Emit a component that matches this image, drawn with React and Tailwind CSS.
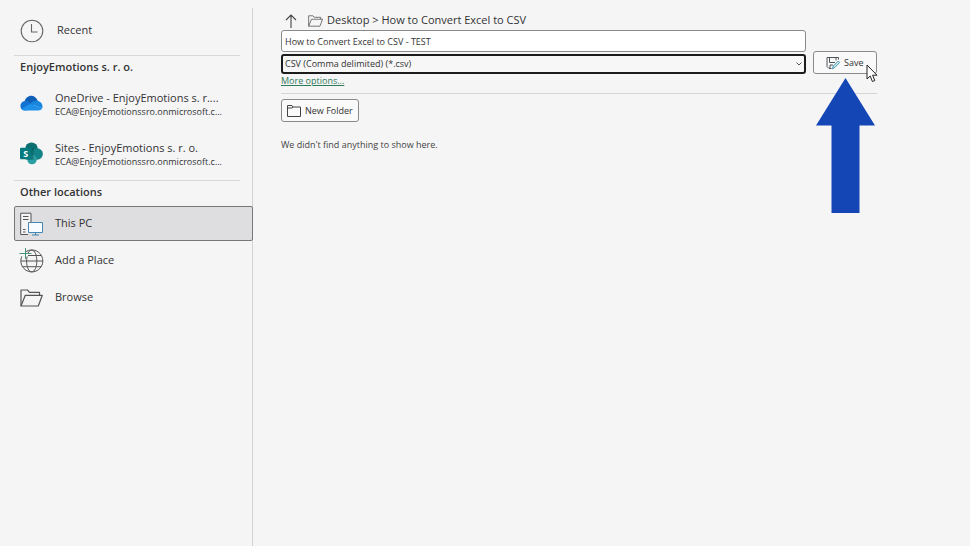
import React, { useState } from 'react';

const accounts = [
  { id: 'onedrive', name: 'OneDrive - EnjoyEmotions s. r....', email: 'ECA@EnjoyEmotionssro.onmicrosoft.c...' },
  { id: 'sites', name: 'Sites - EnjoyEmotions s. r. o.', email: 'ECA@EnjoyEmotionssro.onmicrosoft.c...' },
];

const App = () => {
  const [fileName, setFileName] = useState('How to Convert Excel to CSV - TEST');

  return (
    <div className="flex min-h-screen bg-[#f5f5f6] pt-2 font-['Open_Sans',sans-serif] text-[#333]">
      <Sidebar />
      <main className="min-w-0 flex-1 pt-[3px] pr-[93px] pl-7">
        <div className="flex h-[19px] items-center text-[11px]">
          <button type="button" aria-label="Up one level" className="ml-1">
            <UpIcon />
          </button>
          <OpenFolderIcon className="mr-1 ml-[11px] h-3 w-[15px]" />
          <span className="whitespace-nowrap">Desktop &gt; How to Convert Excel to CSV</span>
        </div>

        <form className="flex items-end gap-[7px]" onSubmit={(e) => e.preventDefault()}>
          <div className="flex min-w-0 flex-1 flex-col gap-[2px]">
            <input
              type="text"
              aria-label="File name"
              value={fileName}
              onChange={(e) => setFileName(e.target.value)}
              className="h-[22px] w-full rounded-[3px] border border-[#8a8a8a] bg-white px-[3px] text-[9px] outline-none"
            />
            <div className="relative">
              <select
                aria-label="File type"
                className="block h-5 w-full appearance-none rounded-[3px] border-2 border-[#1c1c1c] bg-[#f7f7f8] px-[2px] text-[9px] outline-none"
              >
                <option>CSV (Comma delimited) (*.csv)</option>
              </select>
              <ChevronIcon />
            </div>
          </div>
          <div className="relative">
            <button
              type="submit"
              className="flex h-[23px] w-16 items-center gap-1 rounded-[3px] border border-[#8a8a8a] bg-[#f9f9f9] pl-3 text-[9px]"
            >
              <SaveIcon />
              Save
            </button>
            <CursorIcon />
            <BigArrow />
          </div>
        </form>

        <div className="h-5 border-b border-[#d6d4d5]">
          <a href="#" className="inline-block align-top text-[9px] leading-[14px] text-[#2f7a5a] underline">More options...</a>
        </div>
        <button
          type="button"
          className="mt-[5px] flex h-[23px] items-center gap-1 rounded-[3px] border border-[#8a8a8a] bg-[#fafafa] px-[5px] text-[9px]"
        >
          <NewFolderIcon />
          New Folder
        </button>
        <p className="mt-4 text-[9px] leading-[14px] text-[#444]">We didn't find anything to show here.</p>
      </main>
    </div>
  );
};

const Sidebar = () => (
  <nav className="w-[253px] flex-shrink-0 border-r border-[#d2d2d3] pl-[14px] text-[11px]">
    <a href="#" className="flex h-[47px] items-center gap-[13px] pb-[2px] pl-[6px]">
      <ClockIcon />
      Recent
    </a>
    <div className="mr-3 border-t border-[#d8d8d8] pb-px">
      <h2 className="mb-px pl-[6px] text-[11px] leading-[22px] font-semibold">EnjoyEmotions s. r. o.</h2>
      {accounts.map((account) => (
        <a key={account.id} href="#" className="flex h-[50px] items-center gap-3 pl-[6px]">
          {account.id === 'onedrive' ? <OneDriveIcon /> : <SharePointIcon />}
          <span className="whitespace-nowrap">
            <span className="block leading-[15px]">{account.name}</span>
            <span className="block text-[9px] leading-[14px]">{account.email}</span>
          </span>
        </a>
      ))}
    </div>
    <div className="mr-3 border-t border-[#d8d8d8]">
      <h2 className="pl-[6px] text-[11px] leading-[22px] font-semibold">Other locations</h2>
    </div>
    <ul className="mt-[3px] -mr-px flex flex-col gap-[2px]">
      <li>
        <a
          href="#"
          aria-current="page"
          className="flex h-[35px] items-center gap-3 rounded-[2px] border border-[#777] bg-[#dedddf] pl-[5px]"
        >
          <ThisPcIcon />
          This PC
        </a>
      </li>
      <li>
        <a href="#" className="flex h-[35px] items-center gap-3 pl-[6px]">
          <GlobeIcon />
          Add a Place
        </a>
      </li>
      <li>
        <a href="#" className="flex h-[35px] items-center gap-3 pl-[6px]">
          <OpenFolderIcon className="h-[18px] w-[23px]" />
          Browse
        </a>
      </li>
    </ul>
  </nav>
);

const ClockIcon = () => (
  <svg className="h-6 w-6" viewBox="0 0 24 24" fill="none" stroke="#666" strokeWidth="1.1">
    <circle cx="12" cy="12" r="10.8" />
    <path d="M11.5 5v8h6" />
  </svg>
);

const OneDriveIcon = () => (
  <svg className="h-6 w-[23px]" viewBox="0 0 23 24" fill="none">
    <path d="M4.500 9.800C6 2.200 15.500 1.400 18 9.400L11 13.500Z" fill="#0f5fb8" />
    <path d="M5 18.500C-1.200 18.300-1 9.400 5 9c2.400-.2 3.800.8 5.500 2L18 16.500Z" fill="#1272d2" />
    <path d="M10.200 11.800c2-2.600 4.600-3.400 7-3.100 3.800.4 6.200 4.300 5 7.600Z" fill="#1786dc" />
    <path d="M1.500 16.800l8.900-5L22.200 16.300c-.7 1.500-2.200 2.200-4.200 2.200H5c-1.500 0-2.600-.6-3.500-1.700Z" fill="#1e90e8" />
  </svg>
);

const SharePointIcon = () => (
  <svg className="h-6 w-[23px]" viewBox="0 0 23 24">
    <circle cx="11.500" cy="6.800" r="6.300" fill="#0b6f70" />
    <circle cx="17.200" cy="12" r="5.700" fill="#138387" />
    <circle cx="12" cy="17.500" r="4.800" fill="#2aa0a3" />
    <rect x="5.500" y="6.300" width="8" height="11.500" fill="#075455" opacity=".5" />
    <rect x="0" y="5.800" width="11.500" height="11.500" rx="1" fill="#057a7e" />
    <text x="5.700" y="14.800" textAnchor="middle" fontSize="9" fontWeight="700" fill="#fff">S</text>
  </svg>
);

const ThisPcIcon = () => (
  <svg className="h-6 w-[23px]" viewBox="0 0 23 24" fill="none" stroke="#555" strokeWidth="1">
    <path d="M8 22.500H.700V1.200H11V10" fill="#f4f4f5" />
    <path d="M3 4.500h5.500M3 7.500h5.500M3 17.500h2.500M3 20h2.500" />
    <path d="M8.500 10.500h14v10h-14z" fill="#f8fcff" stroke="#4387b2" />
    <path d="M15.500 20.500v2.500M12 23h7" stroke="#4387b2" />
  </svg>
);

const GlobeIcon = () => (
  <svg className="h-6 w-[23px] overflow-visible" viewBox="0 0 23 24" fill="none" stroke="#555" strokeWidth="1">
    <path d="M6 2.600a11 11 0 1 1-4.200 4.800" />
    <path d="M8.200 4C9 2.200 10.200 1.200 11.700 1.200c3 0 5.100 4.600 5.100 10.800s-2.100 10.800-5.100 10.800S6.600 18.200 6.600 12c0-1.600.2-3.200.6-4.600M.9 12h21.700M8 6.500h13M2.500 17.700h18.500" />
    <path d="M5.500-1v11M-.5 4.500h12" stroke="#4b927a" />
  </svg>
);

const OpenFolderIcon = ({ className }) => (
  <svg className={className} viewBox="0 0 23 18" fill="none" stroke="#555" strokeWidth="1.200" strokeLinejoin="round">
    <path d="M1 17V1h6.500l2 2.300h10v3" />
    <path d="M1 17L5.300 6.300h17L18.300 17Z" />
  </svg>
);

const UpIcon = () => (
  <svg className="h-[14px] w-3" viewBox="0 0 12 14" fill="none" stroke="#444" strokeWidth="1.100">
    <path d="M6 14V1M1 6l5-5 5 5" />
  </svg>
);

const ChevronIcon = () => (
  <svg className="pointer-events-none absolute top-2 right-1 h-1 w-[6px]" viewBox="0 0 6 4" fill="none" stroke="#555" strokeWidth="1">
    <path d="M.5.5L3 3 5.500.5" />
  </svg>
);

const SaveIcon = () => (
  <svg className="h-[14px] w-[14px]" viewBox="0 0 14 14" fill="none" stroke="#4c5558" strokeWidth="1">
    <path d="M5.500 12.500H3L1 10.500V1.500h11.500v2" />
    <path d="M3.500 1.500v5h5.500M10 1.500v3M4 12.500V9h3" />
    <path d="M6.500 12.800l.8-2.800 5-5 1.400 1.500-5 5Z" fill="#d7eef5" stroke="#3c94ab" />
  </svg>
);

const NewFolderIcon = () => (
  <svg className="h-3 w-[14px]" viewBox="0 0 14 12" fill="none" stroke="#444" strokeWidth="1">
    <path d="M.5 11.500V.5h4.500l1 1.500h7.500v9.500Z" />
    <path d="M.5 3h4.500l1-1" />
  </svg>
);

const CursorIcon = () => (
  <svg className="absolute top-[13px] left-[53px] z-10 h-[19px] w-3" viewBox="0 0 12 19" fill="#fff" stroke="#222" strokeWidth="1" strokeLinejoin="round">
    <path d="M1 1v14l3.200-3 2.200 5.500 2.400-1L6.600 11.200H11Z" />
  </svg>
);

const BigArrow = () => (
  <svg className="pointer-events-none absolute top-[27px] left-[3px] h-[135px] w-[59px]" viewBox="0 0 59 135" fill="#1447b5">
    <path d="M29.500 0L59 47.500H43.500V135h-28V47.500H0Z" />
  </svg>
);

export default App;
